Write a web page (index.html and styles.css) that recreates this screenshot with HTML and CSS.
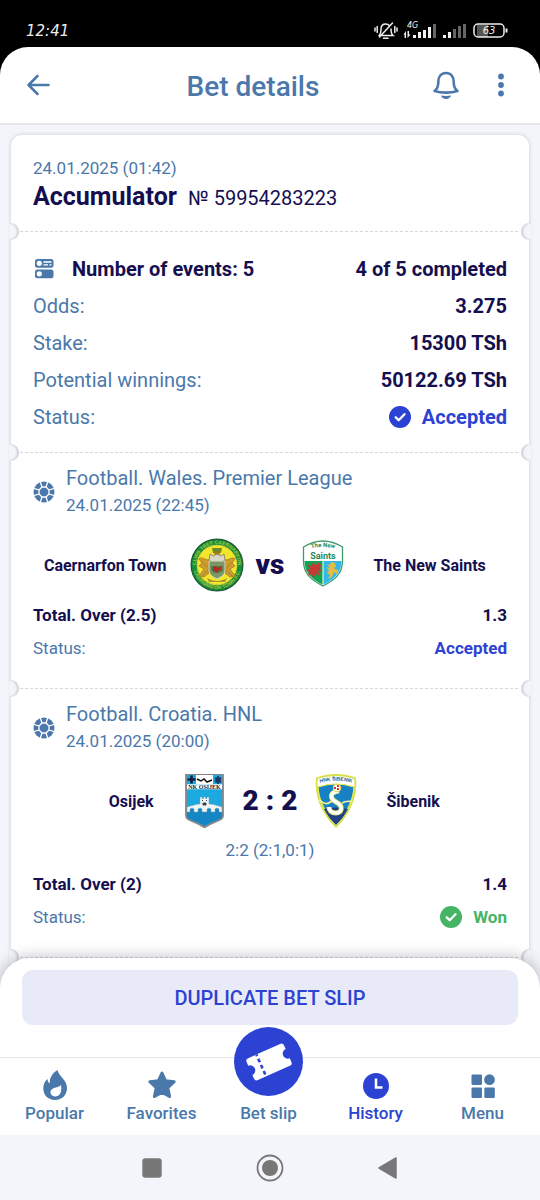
FILE: index.html
```html
<!DOCTYPE html>
<html lang="en">
<head>
<meta charset="utf-8">
<meta name="viewport" content="width=device-width, initial-scale=1">
<title>Bet details</title>
<link rel="stylesheet" href="styles.css">
</head>
<body>
<svg class="defs" aria-hidden="true">
  <symbol id="ball" viewBox="0 0 22 22">
    <circle cx="11" cy="11" r="10.500" fill="#4b78ab"/>
    <path d="M9 6h4l3 3v4l-3 3H9l-3-3V9z" fill="none" stroke="#fff" stroke-width="1.300"/>
    <path d="M9 6 7 0M13 6 15 0M16 9 22 7M16 13 22 15M13 16 15 22M9 16 7 22M6 13 0 15M6 9 0 7" fill="none" stroke="#fff" stroke-width="1.300"/>
  </symbol>
  <symbol id="check" viewBox="0 0 22 22">
    <circle cx="11" cy="11" r="11" fill="currentColor"/>
    <path d="m6.700 11.300 3 2.900 5.800-6" fill="none" stroke="#fff" stroke-width="2.300" stroke-linecap="round" stroke-linejoin="round"/>
  </symbol>
</svg>

<div class="top">
  <div class="statusbar">
    <time class="clock">12:41</time>
    <svg class="signals" viewBox="0 0 136 22" aria-hidden="true">
      <g fill="none" stroke="#eee" stroke-width="1.500" stroke-linecap="round">
        <path d="M5 15.500c2-1.500 2-3 2-6.500 0-3 2-5 4.700-5 1.500 0 2.800.5 3.600 1.500M17 9c0 3.500 0 5 2 6.500H8M18.500 3 5.500 17M9.500 18.300h4.500M1 8v3M3.200 6.500v6M20.800 6.500v6M23 8v3"/>
      </g>
      <text x="33" y="8" class="tiny">4G</text>
      <g fill="#f2f2f2">
        <path d="M29.500 14.500 32 11v7h-1.500v-3.500zM33.500 11H35v3.500h1.500L33.500 18zM39 15h3v3h-3zM44 12h3v6h-3zM49 10h3v8h-3zM54 7h3v11h-3z"/>
        <path d="M69 15h3v3h-3zM74 12h3v6h-3z"/>
      </g>
      <path fill="#666" d="M59 4h3v14h-3zM79 9h3v9h-3zM84 6h3v12h-3zM89 4h3v14h-3z"/>
      <rect x="103" y="5" width="11" height="12" fill="#555"/>
      <rect x="100" y="4" width="30" height="13" rx="4" fill="none" stroke="#eee" stroke-width="1.500"/>
      <path d="M132.500 8.500v4" stroke="#eee" stroke-width="2"/>
      <text x="115" y="14" text-anchor="middle" class="charge">63</text>
    </svg>
  </div>
  <header class="header">
    <button class="back" aria-label="Back">
      <svg width="24" height="24" viewBox="0 0 24 24"><path d="M11.500 3 2.500 12l9 9M3 12h19.500" fill="none" stroke="currentColor" stroke-width="2.500" stroke-linecap="round" stroke-linejoin="round"/></svg>
    </button>
    <h1 class="title">Bet details</h1>
    <button class="bell" aria-label="Notifications">
      <svg width="28" height="30" viewBox="0 0 28 30"><path d="M2.500 21c3-2 3.800-4 3.800-9 0-5.300 2.700-9 7.700-9s7.700 3.700 7.700 9c0 5 .8 7 3.800 9-3.700 1.200-7.500 1.600-11.500 1.600S6.200 22.200 2.500 21z" fill="none" stroke="currentColor" stroke-width="2.600" stroke-linejoin="round"/><path d="M9 25.600c3.300.5 6.700.5 10 0-.5 2-2.500 3.400-5 3.400s-4.500-1.400-5-3.400z" fill="currentColor"/></svg>
    </button>
    <button class="more" aria-label="More options">
      <svg width="8" height="24" viewBox="0 0 8 24"><g fill="currentColor"><circle cx="4" cy="3.500" r="2.900"/><circle cx="4" cy="12" r="2.900"/><circle cx="4" cy="20.500" r="2.900"/></g></svg>
    </button>
  </header>
</div>

<main class="content">
  <article class="slip">
    <section class="part intro">
      <time class="date">24.01.2025 (01:42)</time>
      <h2 class="kind">Accumulator <span class="number">№ 59954283223</span></h2>
    </section>

    <section class="part">
      <dl class="summary">
        <div class="row row-head">
          <dt><svg class="events-icon" width="22" height="20" viewBox="0 0 22 20"><rect x="2" y="0" width="18.500" height="8.700" rx="2.500" fill="#4b78ab"/><rect x="2" y="10.500" width="18.500" height="8.700" rx="2.500" fill="#4b78ab"/><circle cx="6.300" cy="4.300" r="2.600" fill="#fff"/><circle cx="6.300" cy="14.800" r="2.600" fill="#fff"/><path d="M10.500 3h8M10.500 5.800H15M16.500 5.800h2" stroke="#fff" stroke-width="1.300"/></svg>Number of events: 5</dt>
          <dd>4 of 5 completed</dd>
        </div>
        <div class="row"><dt>Odds:</dt><dd>3.275</dd></div>
        <div class="row"><dt>Stake:</dt><dd>15300 TSh</dd></div>
        <div class="row"><dt>Potential winnings:</dt><dd>50122.69 TSh</dd></div>
        <div class="row"><dt>Status:</dt><dd class="accepted"><svg class="check"><use href="#check"/></svg>Accepted</dd></div>
      </dl>
    </section>

    <section class="part event">
      <header class="league">
        <svg class="ball" aria-hidden="true"><use href="#ball"/></svg>
        <div>
          <h3 class="league-name">Football. Wales. Premier League</h3>
          <time class="date">24.01.2025 (22:45)</time>
        </div>
      </header>
      <div class="teams">
        <span class="home">Caernarfon Town</span>
        <svg class="crest" viewBox="0 0 54 54" role="img" aria-label="Caernarfon Town crest">
          <circle cx="27" cy="27" r="25.800" fill="#16903b" stroke="#1b5e35" stroke-width="1.400"/>
          <circle cx="27" cy="27" r="19.800" fill="#f4e62c" stroke="#d8d43a"/>
          <path id="ring-top" d="M6 27a21 21 0 0 1 42 0" fill="none"/>
          <path id="ring-low" d="M3 27a24 24 0 0 0 48 0" fill="none"/>
          <text class="ring"><textPath href="#ring-top" startOffset="50%" text-anchor="middle">CLWB TREF CAERNARFON</textPath></text>
          <text class="ring"><textPath href="#ring-low" startOffset="50%" text-anchor="middle">CAERNARFON TOWN F.C.</textPath></text>
          <path d="M22 10h10l-1 5h-8z" fill="#6f8a25"/>
          <path d="M24 14h6l-1 4h-4z" fill="#a37b26"/>
          <path d="M20 16l3 2 4-2 4 2 3-2 1 6-4 2h-8l-4-2z" fill="#d9d8c8" stroke="#776" stroke-width=".8"/>
          <path d="M19 22c-5 0-7-4-10-1l3 4-3 3 5 3-5 7 5 1 5-4zM35 22c5 0 7-4 10-1l-3 4 3 3-5 3 5 7-5 1-5-4z" fill="#d09a2c" stroke="#a77b2a" stroke-width=".8"/>
          <path d="M12 23c2 4 5 3 7 8M42 24c-2 4-5 3-7 8M12 38l7-7M42 38l-7-7" stroke="#8f8b32" fill="none"/>
          <path d="M19 23h16v9c0 5-4 7-8 9-4-2-8-4-8-9z" fill="#7d9667" stroke="#d5ddba"/>
          <path d="M21 28h12v5l-4 2h-5l-3-3z" fill="#4c8141"/>
          <path d="M23 33v-4l3-1 2 2 3-2v5l-2-1-2 3-2-2z" fill="#b32924"/>
          <path d="M17 40c7 4 13 4 20 0l-2 4H19z" fill="#a6952b"/>
        </svg>
        <strong class="score">vs</strong>
        <svg class="crest" viewBox="0 0 54 54" role="img" aria-label="The New Saints crest">
          <path d="M7.500 9Q27-3 46.500 9v14c0 13-8 19-19.500 25C15.500 42 7.500 36 7.500 23z" fill="#fff" stroke="#3d9b6c" stroke-width="1.300"/>
          <path d="M8.500 23H27v24C16 41 8.500 35 8.500 23z" fill="#11a451"/>
          <path d="M27 23h18.500c0 12-7.500 18-18.500 24z" fill="#34b8ea"/>
          <path d="M27 23v24" stroke="#fff"/>
          <path d="m11 26 4 2 1-3 4 2 2-3 3 3-1 4 2 3-4-1 2 5-4-2-3 4-1-4-4 2 1-4-3-2 4-1z" fill="#c43b35"/>
          <path d="m31 26 3 1 1-3 4 1 1 4-3 1 5 2-1 4-3-2-2 5-4 2 2-4-3-2 2-3-3-3 4 1z" fill="#e7bc43"/>
          <path id="tns-arc" d="M9 12Q27 6 45 12" fill="none"/>
          <text class="tns-small"><textPath href="#tns-arc" startOffset="50%" text-anchor="middle">The New</textPath></text>
          <text class="tns-big" x="27" y="21" text-anchor="middle">Saints</text>
        </svg>
        <span class="away">The New Saints</span>
      </div>
      <dl class="result">
        <div class="row pick"><dt>Total. Over (2.5)</dt><dd>1.3</dd></div>
        <div class="row"><dt>Status:</dt><dd class="accepted">Accepted</dd></div>
      </dl>
    </section>

    <section class="part event">
      <header class="league">
        <svg class="ball" aria-hidden="true"><use href="#ball"/></svg>
        <div>
          <h3 class="league-name">Football. Croatia. HNL</h3>
          <time class="date">24.01.2025 (20:00)</time>
        </div>
      </header>
      <div class="teams">
        <span class="home">Osijek</span>
        <svg class="crest" viewBox="0 0 54 54" role="img" aria-label="Osijek crest">
          <path d="M9 0h37v42c0 5-10 5-18.500 11.500C19 47 9 47 9 42z" fill="#1ba9df" stroke="#8a8589" stroke-width="1.800"/>
          <path d="M10 35h35v7c0 4-9 4-17.500 10C19 46 10 46 10 42z" fill="#1486c4"/>
          <path d="M19 1h17v9H19z" fill="#fff"/>
          <path d="M10.500 5.500h8M14.500 1.500v8" stroke="#131e3b" stroke-width="2.500"/>
          <path d="m20 5 4 2 3-2 3 3 5-2" fill="none" stroke="#111" stroke-width="1.500"/>
          <path d="m41 2 1 2 2 0-1 2 1 2-2 0-1 2-1-2-2 0 1-2-1-2 2 0z" fill="#173966" stroke="#173966"/>
          <path d="M10 10.300h35v5H10z" fill="#fff"/>
          <text class="osijek" x="27.500" y="15" text-anchor="middle">NK OSIJEK</text>
          <path d="M10 33c4-1 9-3 13-3v-7h2v1.500h1.500V23h2v1.500H30V23h2v7c5 0 9 2 13 3v5h-3v-3q-2-2-4 0v3h-4v-3q-2-2-4 0v3h-5v-3q-2-2-4 0v3h-4v-3q-2-2-4 0v3h-3z" fill="#edf5f7" stroke="#7d9aac" stroke-width=".5"/>
          <path d="M26 31v-2h3v2zM25 26.500h1M29 26.500h1" fill="#39454e" stroke="#39454e"/>
        </svg>
        <strong class="score">2 : 2</strong>
        <svg class="crest" viewBox="0 0 54 54" role="img" aria-label="Šibenik crest">
          <path d="M8 4Q27-2 46 4c2 18-5 34-19 49C13 38 6 22 8 4z" fill="#fff" stroke="#d8df42" stroke-width="1.800"/>
          <path d="M9 13Q27 7 45 13c-1 14-7 26-18 37C16 39 10 27 9 13z" fill="#1781c3" stroke="#e4e84e" stroke-width="1.200"/>
          <path d="M15 35c8-2 16-2 24 0-3 6-7 11-12 16-5-5-9-10-12-16z" fill="#214183"/>
          <path d="M10 26c5 4 8 5 13 1M33 29c5-3 7-1 10-2" fill="none" stroke="#f4f0a5" stroke-width="1.700"/>
          <path d="M30 17c-9 1-10 7-3 11 8 4 6 11 0 11-5 0-7-3-7-6" fill="none" stroke="#e5e365" stroke-width="5"/>
          <path d="M30 17c-9 1-10 7-3 11 8 4 6 11 0 11-5 0-7-3-7-6" fill="none" stroke="#fff" stroke-width="3.300"/>
          <circle cx="28" cy="14" r="3.800" fill="#fff" stroke="#ded654"/>
          <path d="M25 13h2v2h-2zM28 11h2v2h-2zM28 14h2v2h-2z" fill="#dc3134"/>
          <path id="sib-arc" d="M8 9.500Q27 3.500 46 9.500" fill="none"/>
          <text class="sibenik"><textPath href="#sib-arc" startOffset="50%" text-anchor="middle">HNK ŠIBENIK</textPath></text>
        </svg>
        <span class="away">Šibenik</span>
      </div>
      <p class="periods">2:2 (2:1,0:1)</p>
      <dl class="result">
        <div class="row pick"><dt>Total. Over (2)</dt><dd>1.4</dd></div>
        <div class="row"><dt>Status:</dt><dd class="won"><svg class="check"><use href="#check"/></svg>Won</dd></div>
      </dl>
    </section>
    <section class="part upcoming"></section>
  </article>
</main>

<footer class="dock">
  <div class="action"><button class="duplicate">DUPLICATE BET SLIP</button></div>
  <nav class="tabs">
    <a class="tab" href="#popular"><svg width="30" height="32" viewBox="0 0 30 32"><path fill="currentColor" fill-rule="evenodd" d="M17.500 1c1 6.500 9.500 9.500 9.500 18 0 7-5 12-12 12S3.300 26 3.300 19.500c0-4 1.500-7.500 4.200-9.500.2 2 .8 3.500 2.200 4.500C9.500 8.500 12.500 4 17.500 1zM21 16c-2 2.300-4.500 2-7.500 3.200-5.300 2.200-3 8.500 2.200 8.200 5.300-.5 6.300-6 5.300-11.400z"/></svg><span>Popular</span></a>
    <a class="tab" href="#favorites"><svg width="30" height="32" viewBox="0 0 30 32"><path fill="currentColor" stroke="currentColor" stroke-width="3" stroke-linejoin="round" d="m15 4 3.500 7.700 8.700 1-6.400 6 1.800 8.800-7.600-4-7.600 4 1.800-8.800-6.400-6 8.700-1z"/></svg><span>Favorites</span></a>
    <a class="tab" href="#slip"><span class="bubble"><svg width="46" height="40" viewBox="0 0 46 40"><g transform="rotate(-24 23 20)"><path fill="#fff" d="M5.500 8h35q3 0 3 3v4a5 5 0 0 0 0 10v4q0 3-3 3h-35q-3 0-3-3v-4a5 5 0 0 0 0-10v-4q0-3 3-3z"/><path d="M14.500 8v24" stroke="#2c42d2" stroke-width="2.600" stroke-dasharray="3.800 2.900" stroke-dashoffset="2"/></g></svg></span><span>Bet slip</span></a>
    <a class="tab current" href="#history" aria-current="page"><svg width="30" height="32" viewBox="0 0 30 32"><circle cx="15" cy="17" r="13" fill="currentColor"/><path d="M15 9.500v9h6.500" fill="none" stroke="#fff" stroke-width="2.500"/></svg><span>History</span></a>
    <a class="tab" href="#menu"><svg width="30" height="32" viewBox="0 0 30 32"><g fill="currentColor"><rect x="3.500" y="5.500" width="10.500" height="10.500" rx="1.300"/><circle cx="21.500" cy="10.700" r="5.400"/><rect x="3.500" y="18.500" width="10.500" height="10.500" rx="1.300"/><rect x="16.300" y="18.500" width="10.500" height="10.500" rx="1.300"/></g></svg><span>Menu</span></a>
  </nav>
  <div class="system">
    <button aria-label="Recent apps"><svg width="28" height="28" viewBox="0 0 28 28"><rect x="4.300" y="4.300" width="19.400" height="19.400" rx="3" fill="#777"/></svg></button>
    <button aria-label="Home"><svg width="28" height="28" viewBox="0 0 28 28"><circle cx="14" cy="14" r="12.500" fill="none" stroke="#777" stroke-width="1.800"/><circle cx="14" cy="14" r="8" fill="#777"/></svg></button>
    <button aria-label="System back"><svg width="28" height="28" viewBox="0 0 28 28"><path d="M22 4v20L5 14z" fill="#777" stroke="#777" stroke-width="1.500" stroke-linejoin="round"/></svg></button>
  </div>
</footer>
</body>
</html>
```

FILE: styles.css
```css
* { box-sizing: border-box; }

body {
  margin: 0;
  min-height: 100vh;
  display: flex;
  flex-direction: column;
  background: #f4f5fa;
  color: #150f50;
  font-family: Roboto, "Noto Sans", sans-serif;
}

h1, h2, h3, p, dl, dd { margin: 0; }
svg { display: block; flex: none; }
button {
  padding: 0;
  border: 0;
  background: none;
  color: inherit;
  font: inherit;
}
.defs { position: absolute; width: 0; height: 0; }

/* Status bar and header */
.top { background: #000; }
.statusbar {
  height: 47px;
  padding: 15px 30px 0 26px;
  display: flex;
  align-items: center;
  justify-content: space-between;
  color: #eee;
}
.clock { font: italic 15px "DejaVu Sans", sans-serif; }
.signals { width: 136px; height: 22px; }
.tiny { font: italic 8px "DejaVu Sans", sans-serif; fill: #eee; }
.charge { font: italic 10px "DejaVu Sans", sans-serif; fill: #eee; }
.header {
  padding: 16px 28px 16px 16px;
  display: flex;
  align-items: center;
  background: #fff;
  border-bottom: 2px solid #e5e6ea;
  border-radius: 28px 28px 0 0;
  color: #4b78ab;
}
.header button { display: grid; place-items: center; height: 44px; }
.header .back { width: 44px; }
.header .bell { width: 32px; }
.header .more { width: 22px; margin-left: 28px; }
.title {
  flex: 1;
  padding: 3px 0 0 16px;
  text-align: center;
  font-size: 28px;
  font-weight: 500;
  line-height: 36px;
}

/* Slip card */
.content { flex: 1; padding: 10px 11px 0; }
.slip {
  background: #fff;
  border-radius: 11px;
  box-shadow: 0 0 4px rgba(30, 35, 70, .2);
}
.part { position: relative; padding: 18px 22px 17px; }
.part + .part {
  border-top: 1px solid transparent;
  background: repeating-linear-gradient(90deg, #d6d6dc 0 3px, #fff 3px 5px) 9px 0 / calc(100% - 18px) 1px no-repeat border-box;
}
.part + .part::before,
.part + .part::after {
  content: "";
  position: absolute;
  top: -9px;
  width: 10px;
  height: 17px;
  background: #f4f5fa;
}
.part + .part::before {
  left: -2px;
  border-radius: 0 9px 9px 0;
  box-shadow: inset -2px 0 2px #d0d1d8;
}
.part + .part::after {
  right: -2px;
  border-radius: 9px 0 0 9px;
  box-shadow: inset 2px 0 2px #d0d1d8;
}
.part.intro { padding: 21px 22px 16px; }
.date {
  display: block;
  color: #4b78ab;
  font-size: 17px;
  line-height: 24px;
}
.kind { font-size: 25px; font-weight: 700; line-height: 34px; }
.number { margin-left: 5px; font-size: 20px; font-weight: 400; }

.row { display: flex; justify-content: space-between; align-items: center; }
.row dt { display: flex; align-items: center; color: #4b78ab; }
.row dd { display: flex; align-items: center; font-weight: 700; }
.summary .row { height: 37px; font-size: 20px; }
.row-head dt, .pick dt { color: #150f50; font-weight: 700; }
.events-icon { margin-right: 17px; }
.check { width: 22px; height: 22px; margin-right: 11px; }
.row .accepted { color: #2c42d2; }
.row .won { color: #45b565; }

/* Events */
.part.event { padding: 12px 22px 24px; }
.league { display: flex; align-items: center; gap: 11px; }
.ball { width: 22px; height: 22px; }
.league-name {
  color: #4b78ab;
  font-size: 20px;
  font-weight: 400;
  line-height: 27px;
}
.league .date { line-height: 27px; }
.teams {
  display: grid;
  grid-template-columns: 1fr auto auto auto 1fr;
  align-items: center;
  margin: 19px 0 6px;
  font-size: 16px;
  font-weight: 700;
}
.home { text-align: right; padding-right: 23px; }
.away { padding-left: 23px; }
.crest { width: 54px; height: 54px; }
.score { padding: 0 12px; font-size: 28px; line-height: 32px; }
.periods {
  color: #4b78ab;
  font-size: 17px;
  line-height: 33px;
  text-align: center;
}
.result .row { height: 33px; font-size: 17px; }
.part.upcoming { padding: 0; height: 40px; }

.ring { font: 700 5px "Liberation Sans", sans-serif; fill: #a8c337; }
.tns-small { font: 700 6px Roboto, sans-serif; fill: #1c8a5a; }
.tns-big { font: 700 9px Roboto, sans-serif; fill: #1c8a5a; }
.osijek { font: 700 6px "Liberation Serif", serif; fill: #222; }
.sibenik { font: 700 5px "Liberation Sans", sans-serif; fill: #275788; }

/* Bottom dock */
.dock {
  position: relative;
  margin-top: -40px;
  background: #fff;
  border-radius: 30px 30px 0 0;
  box-shadow: 0 0 16px rgba(20, 22, 40, .3);
}
.action { padding: 12px 22px 32px; }
.duplicate {
  display: block;
  width: 100%;
  height: 55px;
  border-radius: 11px;
  background: #e9eaf8;
  color: #2c42d2;
  font-size: 20px;
  font-weight: 500;
}
.tabs {
  display: grid;
  grid-template-columns: repeat(5, 1fr);
  height: 78px;
  padding: 11px 4px 0 1px;
  border-top: 1px solid #e5e6ea;
}
.tab {
  position: relative;
  display: flex;
  flex-direction: column;
  align-items: center;
  justify-content: flex-end;
  padding-bottom: 10px;
  color: #4b78ab;
  font-size: 17px;
  font-weight: 500;
  line-height: 24px;
  text-decoration: none;
}
.current { color: #2c42d2; }
.bubble {
  position: absolute;
  bottom: 39px;
  display: grid;
  place-items: center;
  width: 69px;
  height: 69px;
  border-radius: 50%;
  background: #2c42d2;
}
.system {
  display: flex;
  align-items: center;
  justify-content: center;
  gap: 90px;
  height: 65px;
  background: #f4f5fa;
}
```
